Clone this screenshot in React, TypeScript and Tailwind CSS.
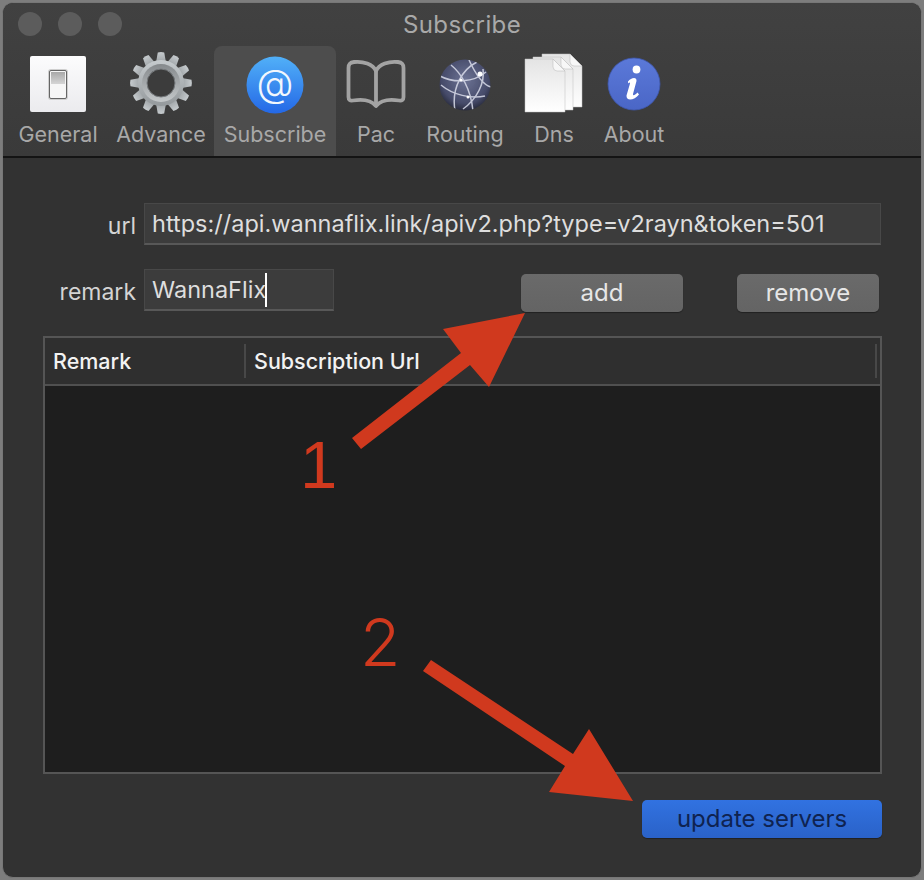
// App.tsx
// Dark macOS preferences window ("Subscribe" tab) with red annotation arrows on top.

import type { ReactNode } from "react";

const RED = "#d0391e";

function SwitchIcon() {
  return (
    <div className="flex h-[56px] w-[56px] items-center justify-center rounded-[2px] bg-gradient-to-b from-[#fcfcfd] to-[#ebebee]">
      <div className="flex h-[29px] w-[18px] flex-col rounded-[2px] border border-[#666] bg-[#f6f6f6] p-[1px] shadow-[0_0_0_1px_#cfcfcf]">
        <div className="h-[12px] bg-gradient-to-b from-[#a9a9a9] to-[#d5d5d5]" />
      </div>
    </div>
  );
}

function GearIcon() {
  const teeth = Array.from({ length: 12 }, (_, i) => i * 30);
  return (
    <svg width="64" height="64" viewBox="0 0 64 64">
      <defs>
        <linearGradient id="gear" x1="0" y1="0" x2="0" y2="1">
          <stop offset="0" stopColor="#c6cbce" />
          <stop offset="1" stopColor="#94999c" />
        </linearGradient>
        <linearGradient id="gearRing" x1="0" y1="0" x2="0" y2="1">
          <stop offset="0" stopColor="#85898c" />
          <stop offset="1" stopColor="#c4c8ca" />
        </linearGradient>
      </defs>
      {teeth.map((deg) => (
        <path key={deg} d="M28.800 1.500 Q32 0.700 35.200 1.500 L37.500 14 H26.500 Z" fill="url(#gear)" transform={`rotate(${deg} 32 32)`} />
      ))}
      <circle cx="32" cy="32" r="23" fill="url(#gear)" />
      <circle cx="32" cy="32" r="19" fill="url(#gearRing)" />
      <circle cx="32" cy="32" r="14" fill="#3c3c3c" stroke="#777b7e" strokeWidth="1" />
    </svg>
  );
}

function AtIcon() {
  return (
    <svg width="58" height="58" viewBox="0 0 58 58">
      <defs>
        <linearGradient id="at" x1="0" y1="0" x2="0" y2="1">
          <stop offset="0" stopColor="#51b0f8" />
          <stop offset="1" stopColor="#2468e6" />
        </linearGradient>
      </defs>
      <circle cx="29" cy="29" r="28.500" fill="url(#at)" />
      <text x="29" y="41" textAnchor="middle" fontSize="38" fontWeight="300" fill="#f2f7fd" fontFamily="Inter, sans-serif">@</text>
    </svg>
  );
}

function BookIcon() {
  return (
    <svg width="60" height="50" viewBox="0 0 60 50" fill="none" stroke="#a3a3a3" strokeWidth="3.800" strokeLinejoin="round" strokeLinecap="round">
      <path d="M30 12 C27 5 17 2 8 3 C4 3.500 2.500 5 2.500 9 V38 C2.500 41 4 42 7 41.500 C16 40 25 41 30 47 C35 41 44 40 53 41.500 C56 42 57.500 41 57.500 38 V9 C57.500 5 56 3.500 52 3 C43 2 33 5 30 12 Z" />
      <path d="M30 12 V46" />
    </svg>
  );
}

function GlobeIcon() {
  return (
    <svg width="52" height="52" viewBox="0 0 52 52">
      <defs>
        <radialGradient id="globe" cx="0.5" cy="0.4" r="0.65">
          <stop offset="0" stopColor="#6d7495" />
          <stop offset="0.7" stopColor="#474c6b" />
          <stop offset="1" stopColor="#20222f" />
        </radialGradient>
        <clipPath id="globeClip">
          <circle cx="26" cy="26" r="25.500" />
        </clipPath>
      </defs>
      <circle cx="26" cy="26" r="25.500" fill="url(#globe)" />
      <g clipPath="url(#globeClip)" fill="none" stroke="#d9dcea" strokeWidth="1.500" opacity="0.85">
        <path d="M1 17 C14 24 34 24 47 13" />
        <path d="M2 26 C14 36 32 40 46 37" />
        <path d="M38 3 C24 10 12 28 16 52" />
        <path d="M12 6 C22 14 32 30 34 52" />
        <path d="M44 10 C46 24 38 40 24 50" />
        <path d="M30 1 C36 14 44 26 52 28" />
      </g>
      <circle cx="41" cy="15" r="2.500" fill="#fff" />
      <circle cx="22" cy="21" r="1.500" fill="#fff" />
      <circle cx="29" cy="38" r="1.500" fill="#fff" />
    </svg>
  );
}

function DocsIcon() {
  const pages = [
    { x: 18, y: 1 },
    { x: 9, y: 4 },
    { x: 1, y: 6 },
  ];
  return (
    <svg width="60" height="60" viewBox="0 0 60 60">
      <defs>
        <linearGradient id="doc" x1="0" y1="0" x2="0" y2="1">
          <stop offset="0" stopColor="#e4e4e4" />
          <stop offset="1" stopColor="#ffffff" />
        </linearGradient>
      </defs>
      {pages.map((p) => (
        <g key={p.x} transform={`translate(${p.x} ${p.y})`}>
          <path d="M0 0 H28 L40 12 V53 H0 Z" fill="url(#doc)" stroke="#bdbdbd" strokeWidth="0.500" />
          <path d="M28 0 L40 12 H32 Q28.500 12 28 8 Z" fill="#f7f7f7" stroke="#b5b5b5" strokeWidth="0.500" />
        </g>
      ))}
    </svg>
  );
}

function InfoIcon() {
  return (
    <svg width="54" height="54" viewBox="0 0 54 54">
      <defs>
        <linearGradient id="info" x1="0" y1="0" x2="0" y2="1">
          <stop offset="0" stopColor="#5b79d9" />
          <stop offset="1" stopColor="#4a66c6" />
        </linearGradient>
      </defs>
      <circle cx="27" cy="27" r="26" fill="url(#info)" stroke="#3f58ad" strokeWidth="0.800" />
      <circle cx="29.500" cy="12.500" r="3.900" fill="#fff" />
      <path d="M21 24.500 C24 20.500 30 19.500 29.500 24 L26 37 C25.800 39 27.500 38.500 30.500 35.500 L32 37.500 C28 43 19 45 19.500 38.500 L23 26.500 C23 25 22 25.500 21 26.500 Z" fill="#fff" />
    </svg>
  );
}

const TABS: { label: string; width: string; icon: ReactNode; active?: boolean; iconY: string }[] = [
  { label: "General", width: "w-[100px]", icon: <SwitchIcon />, iconY: "pt-[10px]" },
  { label: "Advance", width: "w-[106px]", icon: <GearIcon />, iconY: "pt-[5px]" },
  { label: "Subscribe", width: "w-[122px]", icon: <AtIcon />, active: true, iconY: "pt-[10px]" },
  { label: "Pac", width: "w-[80px]", icon: <BookIcon />, iconY: "pt-[13px]" },
  { label: "Routing", width: "w-[98px]", icon: <GlobeIcon />, iconY: "pt-[13px]" },
  { label: "Dns", width: "w-[80px]", icon: <DocsIcon />, iconY: "pt-[7px]" },
  { label: "About", width: "w-[80px]", icon: <InfoIcon />, iconY: "pt-[11px]" },
];

function Field({ label, value, width, caret }: { label: string; value: string; width: string; caret?: boolean }) {
  return (
    <div className="flex items-center">
      <span className="w-[129px] shrink-0 pt-[4px] pr-[8px] text-right text-[23px] text-[#d4d4d4]">{label}</span>
      <div className={`${width} flex h-[42px] items-center overflow-hidden border border-b-2 border-[#484848] border-b-[#585858] bg-[#3c3c3c] pl-[7px] text-[23.500px] whitespace-nowrap text-[#dedede]`}>
        {value}
        {caret && <span className="ml-[-1px] h-[34px] w-[2px] shrink-0 bg-white" />}
      </div>
    </div>
  );
}

function PushButton({ label, className }: { label: string; className: string }) {
  return (
    <div className={`${className} flex h-[38px] items-center justify-center rounded-[5px] bg-gradient-to-b from-[#6a6a6a] to-[#646464] text-[24px] text-[#e6e6e6] shadow-[0_1px_1px_rgba(0,0,0,0.35)]`}>
      {label}
    </div>
  );
}

export default function App() {
  return (
    <div className="relative h-[880px] w-[924px] overflow-hidden bg-[#7d7d7d] p-[2px] font-['Inter','Liberation_Sans',sans-serif]">
      <div className="flex h-full flex-col overflow-hidden rounded-[11px] border border-[#777] bg-[#323232]">
        {/* Title bar and toolbar */}
        <div className="flex h-[155px] shrink-0 flex-col border-b-2 border-[#141414] bg-gradient-to-b from-[#414141] to-[#3a3a3a]">
          <div className="relative flex h-[43px] shrink-0 items-center justify-center">
            <div className="absolute left-[15px] top-[9px] flex gap-[16px]">
              <span className="h-[24px] w-[24px] rounded-full bg-[#5c5c5c]" />
              <span className="h-[24px] w-[24px] rounded-full bg-[#5c5c5c]" />
              <span className="h-[24px] w-[24px] rounded-full bg-[#5c5c5c]" />
            </div>
            <span className="pt-[1px] text-[24px] tracking-[0.400px] text-[#a9a9a9]">Subscribe</span>
          </div>
          <div className="flex flex-1 pl-[5px]">
            {TABS.map((tab) => (
              <div
                key={tab.label}
                className={`${tab.width} flex flex-col items-center rounded-t-[8px] ${tab.active ? "bg-[#4d4d4d]" : ""}`}
              >
                <div className={`${tab.iconY} flex h-[74px] items-start justify-center`}>{tab.icon}</div>
                <span className="text-[21.500px] leading-[28px] text-[#a8a8a8]">{tab.label}</span>
              </div>
            ))}
          </div>
        </div>

        {/* Form */}
        <div className="flex flex-1 flex-col pl-[12px] pr-[38px] pt-[45px]">
          <Field
            label="url"
            width="w-[737px]"
            value="https://api.wannaflix.link/apiv2.php?type=v2rayn&token=501"
          />
          <div className="mt-[24px] flex items-start">
            <Field label="remark" width="w-[190px]" value="WannaFlix" caret />
            <PushButton label="add" className="ml-[187px] mt-[5px] w-[162px]" />
            <PushButton label="remove" className="ml-[54px] mt-[5px] w-[142px]" />
          </div>

          {/* Table */}
          <div className="ml-[28px] mt-[24px] flex h-[438px] w-[839px] flex-col border-2 border-[#555]">
            <div className="flex h-[48px] shrink-0 items-center border-b-2 border-[#505050] bg-[#2f2f2f] text-[21.500px] font-medium text-[#f2f2f2]">
              <span className="w-[201px] border-r-2 border-[#484848] pl-[8px] leading-[34px]">Remark</span>
              <span className="flex-1 pl-[8px] leading-[34px]">Subscription Url</span>
              <span className="mr-[3px] h-[34px] w-[2px] bg-[#484848]" />
            </div>
            <div className="flex-1 bg-[#1e1e1e]" />
          </div>

          <div className="mt-[26px] flex justify-end">
            <div className="mr-[1px] flex h-[38px] w-[240px] items-center justify-center rounded-[5px] bg-gradient-to-b from-[#3172e1] to-[#2a62c8] text-[24px] text-[#0f2350] shadow-[0_1px_1px_rgba(0,0,0,0.35)]">
              update servers
            </div>
          </div>
        </div>
      </div>

      {/* Annotations drawn over the screenshot */}
      <svg className="absolute inset-0" width="924" height="880" viewBox="0 0 924 880">
        <polygon points="525,313 443,329 461,353 352,438 361,449 470,365 489,387" fill={RED} />
        <polygon points="431,660 423,671 565,766 549,792 633,801 589,729 573,754" fill={RED} />
      </svg>
      <span className="absolute left-[300px] top-[425px] font-['Liberation_Sans',sans-serif] text-[67px] leading-[80px] text-[#d0391e]">1</span>
      <span className="absolute left-[360px] top-[602px] font-['Inter',sans-serif] text-[66px] leading-[80px] font-light text-[#d0391e]">2</span>
    </div>
  );
}
